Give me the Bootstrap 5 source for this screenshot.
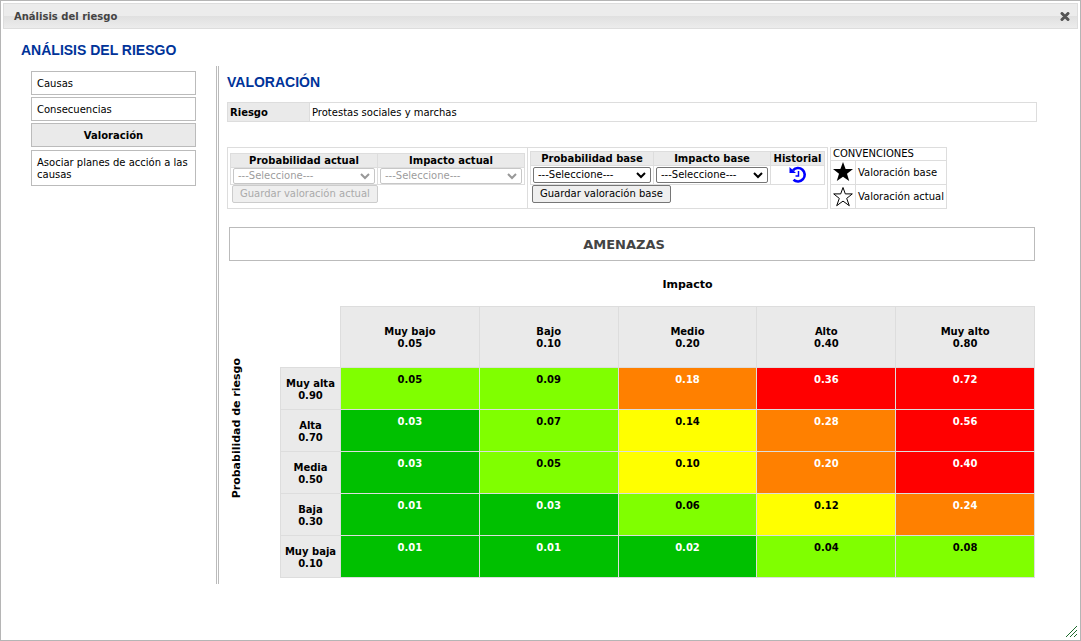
<!DOCTYPE html>
<html lang="es">
<head>
<meta charset="utf-8">
<meta name="viewport" content="width=device-width, initial-scale=1">
<title>Análisis del riesgo</title>
<link href="https://cdn.jsdelivr.net/npm/bootstrap@5.3.0/dist/css/bootstrap.min.css" rel="stylesheet">
<style>
  :root { --edge: #ddd; --frame: #bbb; --head: #eaeaea; }
  body { font: 10px/12px "DejaVu Sans", Verdana, sans-serif; color: #000; background: #fff; }
  .dialog { min-height: 100vh; padding: 2px; border: 1px solid #b5b5b5; }
  .title-bar { height: 26px; padding: 2px 7px 0 10px; border: 1px solid var(--edge); color: #444;
    background: linear-gradient(#ececec 0 50%, #e0e0e0 50%, #ececec); }
  .icon-btn { padding: 0; border: 0; background: none; line-height: 0; }
  h1, h2 { margin: 0; font: bold 14px/16px "Liberation Sans", Arial, sans-serif; color: #039; }
  h1 { padding: 13px 18px 8px; }
  .side { width: 213px; padding: 5px 20px 0 28px; }
  .side a { display: block; padding: 6px 5px 4px; border: 1px solid var(--frame); color: #000; text-decoration: none; }
  .side a.active { background: var(--head); font-weight: bold; text-align: center; }
  .side-nav { display: grid; gap: 2px; }
  .side a.tall { margin-top: 1px; }
  .content { min-width: 0; padding: 8px 41px 6px 8px; border-left: 3px double var(--frame); }
  table { border-collapse: collapse; }
  th, td { border: 1px solid var(--edge); }
  th { background: var(--head); font-weight: bold; }
  .risk { margin: 12px 0 25px; }
  .risk th { width: 82px; }
  .risk th, .risk td { padding: 4px 2px 2px; line-height: 12px; }
  .panel { width: 301px; padding: 5px 2px; border: 1px solid var(--edge); }
  .panel + .panel { margin-left: -1px; padding-top: 3px; }
  .panel table { width: 295px; table-layout: fixed; }
  .panel th { padding: 1px 0 0; text-align: center; white-space: nowrap; }
  .panel td { padding: 0 2px; text-align: center; }
  .col-prob { width: 123px; }
  .col-hist { width: 54px; }
  .pick { display: block; width: 100%; height: 16px; padding: 0 20px 0 4px; border: 1px solid #767676; border-radius: 2px;
    color: #000; appearance: none; font: inherit;
    background: #fff url("data:image/svg+xml,%3Csvg xmlns='http://www.w3.org/2000/svg' viewBox='0 0 10 8'%3E%3Cpath d='M1 2l4 4 4-4' fill='none' stroke='%23000' stroke-width='2'/%3E%3C/svg%3E") no-repeat right 4px center / 10px 8px; }
  .pick:disabled { opacity: .4; }
  .save { display: block; height: 18px; margin-left: 2px; padding: 0 7px; border: 1px solid #767676; border-radius: 2px;
    background: #efefef; color: #000; font: inherit; }
  .save:disabled { color: #aaa; border-color: #ccc; background: #efefef; }
  .legend-box { margin-left: 2px; }
  .legend-box td { padding: 0 2px; }
  .legend-box svg { display: block; }
  .legend-box .mark-cell { padding: 1px 2px; }
  .banner { margin: 18px 2px 0; padding: 10px 16px 8px 0; border: 1px solid var(--frame); color: #444; font: bold 13px/14px "DejaVu Sans", Verdana, sans-serif; text-align: center; }
  .axis { font-size: 11px; font-weight: bold; }
  .axis-x { margin: 18px 2px 15px 113px; line-height: 12px; }
  .axis-y { width: 51px; padding-bottom: 28px; }
  .axis-y span { writing-mode: vertical-rl; transform: rotate(180deg); line-height: 16px; }
  .matrix-wrap { margin: 0 2px; }
  .matrix-area { min-width: 0; }
  .matrix { table-layout: fixed; width: 100%; }
  .matrix th { height: 42px; text-align: center; vertical-align: middle; padding: 3px 0 0; }
  .matrix thead th { height: 61px; padding: 1px 0 0; }
  .matrix td { padding: 6px 0 0; text-align: center; vertical-align: top; font-weight: bold; }
  .matrix .corner { width: 60px; border-width: 0 1px 1px 0; background: none; }
  .low { background: #00c000; color: #fff; }
  .mild { background: #80ff00; }
  .mid { background: #ff0; }
  .high { background: #ff8000; color: #fff; }
  .top { background: #f00; color: #fff; }
  .grip { right: 3px; bottom: 3px; line-height: 0; }
</style>
</head>
<body>
<div class="dialog position-relative">
  <header class="title-bar d-flex align-items-center justify-content-between">
    <strong>Análisis del riesgo</strong>
    <button type="button" class="icon-btn" aria-label="Cerrar">
      <svg width="10" height="10" viewBox="0 0 10 10"><path d="M2 1.500l6 6M8 1.500l-6 6" stroke="#555" stroke-width="3" stroke-linecap="round"/></svg>
    </button>
  </header>
  <h1>ANÁLISIS DEL RIESGO</h1>
  <div class="d-flex">
    <aside class="side flex-shrink-0">
      <nav class="side-nav">
        <a href="#">Causas</a>
        <a href="#">Consecuencias</a>
        <a href="#" class="active" aria-current="page">Valoración</a>
        <a href="#" class="tall">Asociar planes de acción a las causas</a>
      </nav>
    </aside>
    <main class="content flex-grow-1">
      <h2>VALORACIÓN</h2>
      <table class="risk w-100">
        <tr><th scope="row">Riesgo</th><td>Protestas sociales y marchas</td></tr>
      </table>

      <div class="d-flex align-items-stretch">
        <section class="panel">
          <table>
            <tr><th><label for="pa">Probabilidad actual</label></th><th><label for="ia">Impacto actual</label></th></tr>
            <tr>
              <td><select id="pa" class="pick" disabled><option>---Seleccione---</option></select></td>
              <td><select id="ia" class="pick" disabled><option>---Seleccione---</option></select></td>
            </tr>
          </table>
          <button type="button" class="save" disabled>Guardar valoración actual</button>
        </section>
        <section class="panel">
          <table>
            <colgroup><col class="col-prob"><col><col class="col-hist"></colgroup>
            <tr><th><label for="pb">Probabilidad base</label></th><th><label for="ib">Impacto base</label></th><th>Historial</th></tr>
            <tr>
              <td><select id="pb" class="pick"><option>---Seleccione---</option></select></td>
              <td><select id="ib" class="pick"><option>---Seleccione---</option></select></td>
              <td><button type="button" class="icon-btn d-block mx-auto" aria-label="Historial">
                <svg width="18" height="18" viewBox="0 0 18 18" fill="none" stroke="#00f"><path d="M4 4.300A6.700 6.700 0 1 1 4.500 13.700" stroke-width="2.600"/><path d="M9.500 5v5H6.500" stroke-width="1.500"/><path d="M.5 1v6H7z" fill="#00f" stroke="none"/></svg>
              </button></td>
            </tr>
          </table>
          <button type="button" class="save">Guardar valoración base</button>
        </section>
        <table class="legend-box">
          <tr><td colspan="2">CONVENCIONES</td></tr>
          <tr><td class="mark-cell"><svg width="20" height="21" viewBox="0 0 20 21"><path d="M10 0l2.600 7H20l-6 4.800 2.200 7.200L10 14.700 3.800 19 6 11.800 0 7h7.400z"/></svg></td><td>Valoración base</td></tr>
          <tr><td class="mark-cell"><svg width="20" height="21" viewBox="0 0 20 21"><path d="M10 1.500l2.300 6.400h7l-5.600 4.500 2.600 7.300-6.300-4.600-6.300 4.600 2.600-7.300L.7 7.900h7z" fill="none" stroke="#000"/></svg></td><td>Valoración actual</td></tr>
        </table>
      </div>

      <div class="banner">AMENAZAS</div>
      <div class="axis axis-x text-center">Impacto</div>
      <div class="d-flex matrix-wrap">
        <div class="axis axis-y flex-shrink-0 d-flex align-items-center"><span>Probabilidad de riesgo</span></div>
        <div class="matrix-area flex-grow-1">
        <table class="matrix">
          <thead>
            <tr><th class="corner"></th><th scope="col">Muy bajo<br>0.05</th><th scope="col">Bajo<br>0.10</th><th scope="col">Medio<br>0.20</th><th scope="col">Alto<br>0.40</th><th scope="col">Muy alto<br>0.80</th></tr>
          </thead>
          <tbody>
            <tr><th scope="row">Muy alta<br>0.90</th><td class="mild">0.05</td><td class="mild">0.09</td><td class="high">0.18</td><td class="top">0.36</td><td class="top">0.72</td></tr>
            <tr><th scope="row">Alta<br>0.70</th><td class="low">0.03</td><td class="mild">0.07</td><td class="mid">0.14</td><td class="high">0.28</td><td class="top">0.56</td></tr>
            <tr><th scope="row">Media<br>0.50</th><td class="low">0.03</td><td class="mild">0.05</td><td class="mid">0.10</td><td class="high">0.20</td><td class="top">0.40</td></tr>
            <tr><th scope="row">Baja<br>0.30</th><td class="low">0.01</td><td class="low">0.03</td><td class="mild">0.06</td><td class="mid">0.12</td><td class="high">0.24</td></tr>
            <tr><th scope="row">Muy baja<br>0.10</th><td class="low">0.01</td><td class="low">0.01</td><td class="low">0.02</td><td class="mild">0.04</td><td class="mild">0.08</td></tr>
          </tbody>
        </table>
        </div>
      </div>
    </main>
  </div>
  <div class="grip position-absolute"><svg width="11" height="11" viewBox="0 0 11 11"><path d="M0 11L11 0M4 11l7-7M8 11l3-3" stroke="#1c6b2c"/></svg></div>
</div>
<script src="https://cdn.jsdelivr.net/npm/bootstrap@5.3.0/dist/js/bootstrap.bundle.min.js"></script>
</body>
</html>
